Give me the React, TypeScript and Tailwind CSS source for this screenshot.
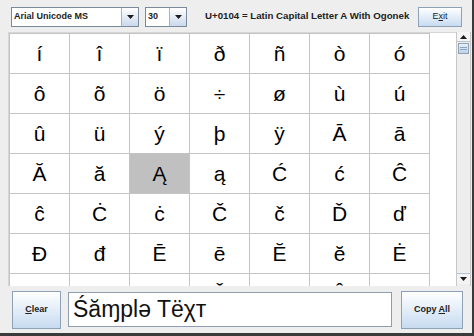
import React from 'react';

const rows: string[][] = [
  ['í', 'î', 'ï', 'ð', 'ñ', 'ò', 'ó'],
  ['ô', 'õ', 'ö', '÷', 'ø', 'ù', 'ú'],
  ['û', 'ü', 'ý', 'þ', 'ÿ', 'Ā', 'ā'],
  ['Ă', 'ă', 'Ą', 'ą', 'Ć', 'ć', 'Ĉ'],
  ['ĉ', 'Ċ', 'ċ', 'Č', 'č', 'Ď', 'ď'],
  ['Đ', 'đ', 'Ē', 'ē', 'Ĕ', 'ĕ', 'Ė'],
  ['ė', 'Ę', 'ę', 'Ě', 'ě', 'Ĝ', 'ĝ'],
];

const font = { fontFamily: '"Liberation Sans", Arial, sans-serif' };

const Arrow = ({ up }: { up?: boolean }) => (
  <svg width="7" height="4" viewBox="0 0 7 4">
    <path d={up ? 'M0 4 L3.5 0 L7 4 Z' : 'M0 0 L7 0 L3.5 4 Z'} fill="#1a1a1a" />
  </svg>
);

const Combo = ({ text, width }: { text: string; width: string }) => (
  <div className={`flex h-[20px] border border-[#7a8a99] bg-white ${width}`}>
    <div className="flex-1 flex items-center pl-[2px] text-[9px] font-bold text-[#222]">{text}</div>
    <div className="w-[17px] flex items-center justify-center border-l border-[#a3b3c4] bg-gradient-to-b from-[#ffffff] to-[#c9d9ec]">
      <Arrow />
    </div>
  </div>
);

const Button = ({ children, className }: { children: React.ReactNode; className: string }) => (
  <div
    className={`flex items-center justify-center border border-[#8ea1b6] bg-gradient-to-b from-[#ffffff] to-[#c7dbf0] text-[9px] font-bold text-[#222] ${className}`}
  >
    {children}
  </div>
);

export default function App() {
  return (
    <div
      className="w-[474px] h-[336px] bg-[#eeeeee] flex flex-col border-r-2 border-b-[3px] border-[#3a3a3a] overflow-hidden"
      style={font}
    >
      {/* top bar */}
      <div className="h-[32px] flex items-center pl-[11px] pt-[1px]">
        <Combo text="Arial Unicode MS" width="w-[128px]" />
        <div className="w-[6px]" />
        <Combo text="30" width="w-[42px]" />
        <div className="ml-[18px] text-[9.7px] font-bold text-[#222] whitespace-nowrap">
          U+0104 = Latin Capital Letter A With Ogonek
        </div>
        <Button className="ml-auto mr-[10px] w-[44px] h-[20px] font-normal">
          <span>
            E<span className="underline">x</span>it
          </span>
        </Button>
      </div>

      {/* character grid */}
      <div className="h-[254px] flex pl-[8px] pr-[1px]">
        <div className="flex-1 bg-white border-l border-t border-[#d6d6d6] overflow-hidden">
          <div className="grid grid-cols-[repeat(7,60px)] border-l border-t border-[#c4c4c4] w-max">
            {rows.flat().map((ch, i) => (
              <div
                key={i}
                className={`h-[40px] flex items-center justify-center border-r border-b border-[#c4c4c4] text-[21px] text-black ${
                  ch === 'Ą' ? 'bg-[#c0c0c0]' : ''
                }`}
              >
                {ch}
              </div>
            ))}
          </div>
        </div>
        <div className="w-[15px] flex flex-col bg-[#eeeeee] border-l border-r border-[#c8c8c8]">
          <div className="h-[10px] flex items-center justify-center border-b border-[#b8c4d0] bg-[#f4f4f4]">
            <Arrow up />
          </div>
          <div className="h-[11px] mx-[1px] mt-[1px] flex flex-col items-center justify-center gap-[1px] border border-[#8ea1b6] bg-gradient-to-b from-[#e8f0fa] to-[#bdd2ea]">
            <div className="w-[7px] h-px bg-[#8fa6c0]" />
            <div className="w-[7px] h-px bg-[#8fa6c0]" />
          </div>
          <div className="flex-1" />
          <div className="h-[11px] flex items-center justify-center border-t border-[#b8c4d0] bg-[#f4f4f4] mb-[2px]">
            <Arrow />
          </div>
        </div>
      </div>

      {/* bottom bar */}
      <div className="flex-1 flex items-center pl-[12px] pr-[9px]">
        <Button className="w-[49px] h-[38px]">
          <span>
            <span className="underline">C</span>lear
          </span>
        </Button>
        <div className="ml-[7px] w-[324px] h-[35px] bg-white border border-[#8e9db0] flex items-center pl-[4px] text-[23px] text-[#111] whitespace-nowrap">
          Śăɱplə Tëχт
        </div>
        <Button className="ml-auto w-[62px] h-[38px]">
          <span>
            Copy <span className="underline">A</span>ll
          </span>
        </Button>
      </div>
    </div>
  );
}
